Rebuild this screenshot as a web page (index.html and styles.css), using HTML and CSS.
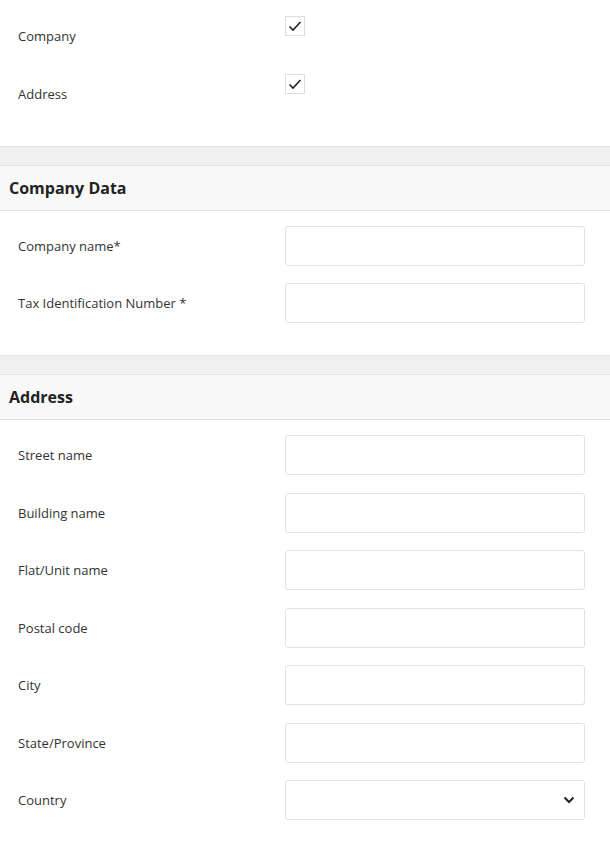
FILE: index.html
```html
<!DOCTYPE html>
<html>
<head>
<meta charset="utf-8">
<link rel="stylesheet" href="styles.css">
</head>
<body>
<div class="form">
  <div class="section-body top">
    <div class="row">
      <label class="label">Company</label>
      <div class="field"><span class="check"><svg width="14" height="12" viewBox="0 0 14 12"><path d="M1.5 6.5 L5 10 L12.5 2" fill="none" stroke="#222" stroke-width="1.6"/></svg></span></div>
    </div>
    <div class="row">
      <label class="label">Address</label>
      <div class="field"><span class="check"><svg width="14" height="12" viewBox="0 0 14 12"><path d="M1.5 6.5 L5 10 L12.5 2" fill="none" stroke="#222" stroke-width="1.6"/></svg></span></div>
    </div>
  </div>
  <div class="band"></div>
  <div class="section-head">Company Data</div>
  <div class="section-body tight">
    <div class="row"><label class="label">Company name*</label><div class="field"><div class="input"></div></div></div>
    <div class="row"><label class="label">Tax Identification Number *</label><div class="field"><div class="input"></div></div></div>
  </div>
  <div class="band"></div>
  <div class="section-head">Address</div>
  <div class="section-body">
    <div class="row"><label class="label">Street name</label><div class="field"><div class="input"></div></div></div>
    <div class="row"><label class="label">Building name</label><div class="field"><div class="input"></div></div></div>
    <div class="row"><label class="label">Flat/Unit name</label><div class="field"><div class="input"></div></div></div>
    <div class="row"><label class="label">Postal code</label><div class="field"><div class="input"></div></div></div>
    <div class="row"><label class="label">City</label><div class="field"><div class="input"></div></div></div>
    <div class="row"><label class="label">State/Province</label><div class="field"><div class="input"></div></div></div>
    <div class="row"><label class="label">Country</label><div class="field"><div class="input select"><svg class="chev" width="12" height="8" viewBox="0 0 12 8"><path d="M1.5 1.5 L6 6 L10.5 1.5" fill="none" stroke="#222" stroke-width="2"/></svg></div></div></div>
  </div>
</div>
</body>
</html>
```
FILE: styles.css
```css
* { box-sizing: border-box; }
body {
  margin: 0;
  background: #fff;
  font-family: "Open Sans", "Liberation Sans", sans-serif;
  color: #333;
}
.form { width: 610px; }
.section-body {
  display: flex;
  flex-direction: column;
  gap: 17.5px;
  padding: 15px 25px 32px 18px;
}
.section-body.tight { gap: 17px; }
.section-body.top { padding-top: 16px; padding-bottom: 32.5px; }
.row {
  display: flex;
  align-items: center;
  height: 40px;
}
.top .row { align-items: stretch; }
.label {
  width: 267px;
  font-size: 13px;
  color: #333;
  display: flex;
  align-items: center;
}
.field { flex: 1; display: flex; }
.check {
  width: 20px;
  height: 20px;
  border: 1px solid #ddd;
  display: flex;
  align-items: center;
  justify-content: center;
  background: #fff;
}
.input {
  width: 300px;
  height: 40px;
  border: 1px solid #e2e2e2;
  border-radius: 3px;
  background: #fff;
}
.select {
  display: flex;
  align-items: center;
  justify-content: flex-end;
  padding-right: 9px;
}
.band {
  height: 20px;
  background: #f0f0f0;
  border-top: 1px solid #e4e4e4;
  border-bottom: 1px solid #e4e4e4;
}
.section-head {
  height: 45px;
  background: #f8f8f8;
  border-bottom: 1px solid #e2e2e2;
  padding-left: 9px;
  display: flex;
  align-items: center;
  font-size: 16px;
  font-weight: 700;
  color: #222;
}
```
